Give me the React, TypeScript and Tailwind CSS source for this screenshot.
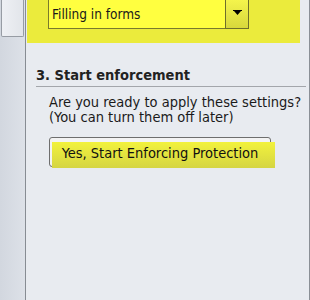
export default function App() {
  return (
    <div className="flex h-[300px] w-[310px] overflow-hidden bg-[#e8ebf0] font-['DejaVu_Sans_Condensed','DejaVu_Sans',sans-serif] text-[#1a1a1a]">
      {/* left scrollbar strip */}
      <div className="w-[26px] shrink-0 border-r border-[#878c93] bg-gradient-to-r from-[#d2d7df] to-[#dde1e8]">
        <div className="ml-[1px] h-[37px] w-[23px] rounded-b-[2px] border border-t-0 border-[#979ca4] bg-gradient-to-r from-[#eef0f4] to-[#e2e5ea]" />
      </div>
      {/* main pane */}
      <div className="flex flex-1 flex-col border-r border-[#8a8f96]">
        <div className="ml-[1px] h-[43px] w-[273px] bg-[#ebeb3c]">
          <div className="ml-[21px] flex h-[29px] w-[201px]">
            <div className="flex h-[29px] w-[177px] items-center border-b border-l border-[#7a7a2c] bg-[#ffff40] pl-[3px] pt-[2px] text-[13.5px] leading-none">
              Filling in forms
            </div>
            <div className="flex h-[29px] w-[24px] items-center justify-center border border-t-0 border-[#6f6f2a] bg-gradient-to-b from-[#f4f44c] to-[#d8d83c]">
              <svg width="9" height="6" viewBox="0 0 9 6" className="mb-[3px]">
                <rect x="0" y="0" width="9" height="1" fill="#000" />
                <polygon points="1,1 8,1 4.5,5" fill="#000" />
              </svg>
            </div>
          </div>
        </div>
        <div className="ml-[10px] mr-[3px] mt-[24px] border-b border-[#a3a6ab] pb-[3px] text-[14.5px] font-bold leading-[16px] text-[#222]">
          3. Start enforcement
        </div>
        <div className="ml-[23px] mt-[8px] text-[14.5px] leading-[15px]">
          <div>Are you ready to apply these settings?</div>
          <div>(You can turn them off later)</div>
        </div>
        <div className="ml-[23px] mt-[12px]">
          <div className="relative h-[30px] w-[222px] rounded-[3px] border border-[#6e6e6e] bg-[#f3f3f3]">
            <div className="absolute bottom-[-2px] left-[2px] right-[-5px] top-[4px] bg-gradient-to-b from-[#f2f23c] to-[#d5d542]" />
            <div className="relative flex h-full items-center justify-center pt-[3px] text-[14.5px] leading-none text-[#111]">
              Yes, Start Enforcing Protection
            </div>
          </div>
        </div>
      </div>
    </div>
  );
}
